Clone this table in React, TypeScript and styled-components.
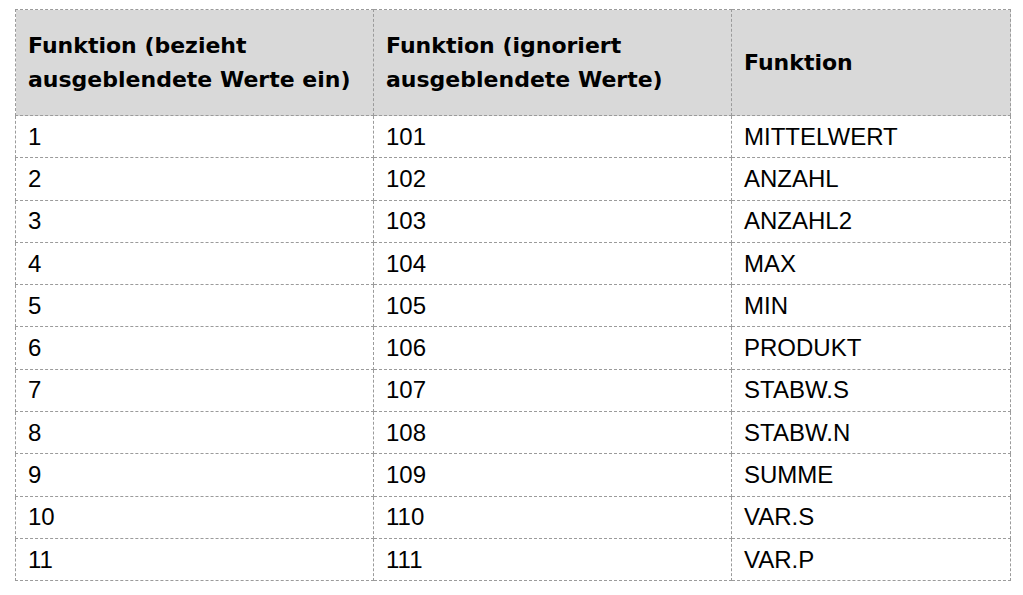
import React from "react";
import styled, { createGlobalStyle } from "styled-components";

const GlobalStyle = createGlobalStyle`
  html, body { margin: 0; padding: 0; background: #ffffff; }
  body { font-family: "Liberation Sans", Arial, sans-serif; color: #000; }
`;

const Page = styled.div`
  padding: 9px 0 0 15px;
`;

const Table = styled.table`
  border-collapse: collapse;
  table-layout: fixed;
  width: 995px;
`;

const Col = styled.col<{ $w: number }>`
  width: ${(p) => p.$w}px;
`;

const HeadCell = styled.th`
  background: #d9d9d9;
  border: 1px dashed #9b9b9b;
  height: 105px;
  padding: 0 12px;
  text-align: left;
  vertical-align: middle;
  font-family: "DejaVu Sans", Verdana, sans-serif;
  font-weight: 700;
  font-size: 22px;
  line-height: 34px;
  color: #000;
  white-space: nowrap;
`;

const Cell = styled.td`
  border: 1px dashed #9b9b9b;
  height: 41.3px;
  padding: 0 12px;
  vertical-align: middle;
  font-family: "Liberation Sans", Arial, sans-serif;
  font-size: 24px;
  line-height: 26px;
  color: #000;
  white-space: nowrap;
`;

const rows: [string, string, string][] = [
  ["1", "101", "MITTELWERT"],
  ["2", "102", "ANZAHL"],
  ["3", "103", "ANZAHL2"],
  ["4", "104", "MAX"],
  ["5", "105", "MIN"],
  ["6", "106", "PRODUKT"],
  ["7", "107", "STABW.S"],
  ["8", "108", "STABW.N"],
  ["9", "109", "SUMME"],
  ["10", "110", "VAR.S"],
  ["11", "111", "VAR.P"],
];

export default function App() {
  return (
    <>
      <GlobalStyle />
      <Page>
        <Table>
          <colgroup>
            <Col $w={358} />
            <Col $w={358} />
            <Col $w={279} />
          </colgroup>
          <thead>
            <tr>
              <HeadCell>
                Funktion (bezieht
                <br />
                ausgeblendete Werte ein)
              </HeadCell>
              <HeadCell>
                Funktion (ignoriert
                <br />
                ausgeblendete Werte)
              </HeadCell>
              <HeadCell>Funktion</HeadCell>
            </tr>
          </thead>
          <tbody>
            {rows.map(([a, b, c]) => (
              <tr key={a}>
                <Cell>{a}</Cell>
                <Cell>{b}</Cell>
                <Cell>{c}</Cell>
              </tr>
            ))}
          </tbody>
        </Table>
      </Page>
    </>
  );
}
